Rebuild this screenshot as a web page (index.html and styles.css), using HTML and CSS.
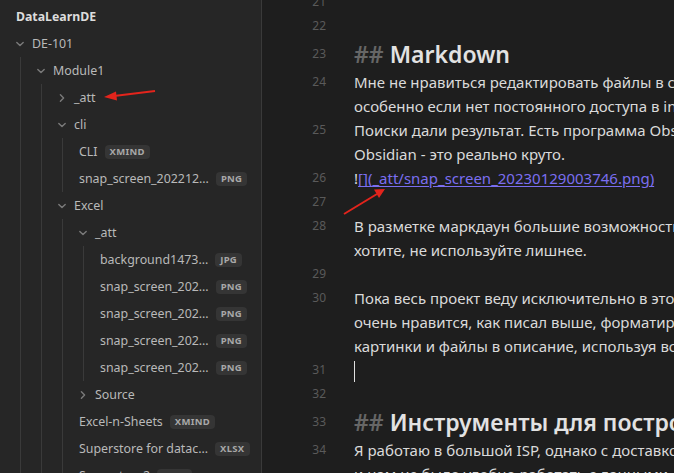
FILE: index.html
```html
<!DOCTYPE html>
<html lang="ru">
<head>
<meta charset="utf-8">
<title>DataLearnDE</title>
<link rel="stylesheet" href="styles.css">
</head>
<body>
<aside class="sidebar">
  <div class="vault-title">DataLearnDE</div>
  <div class="tree">
    <div class="folder">
      <div class="row folder-row"><svg class="chev" viewBox="0 0 10 10"><path d="M1.8 3.4 L5 6.6 L8.2 3.4"/></svg><span class="name">DE-101</span></div>
      <div class="children">
        <div class="folder">
          <div class="row folder-row"><svg class="chev" viewBox="0 0 10 10"><path d="M1.8 3.4 L5 6.6 L8.2 3.4"/></svg><span class="name">Module1</span></div>
          <div class="children">
            <div class="folder">
              <div class="row folder-row"><svg class="chev" viewBox="0 0 10 10"><path d="M3.4 1.8 L6.6 5 L3.4 8.2"/></svg><span class="name">_att</span></div>
            </div>
            <div class="folder">
              <div class="row folder-row"><svg class="chev" viewBox="0 0 10 10"><path d="M1.8 3.4 L5 6.6 L8.2 3.4"/></svg><span class="name">cli</span></div>
              <div class="children">
                <div class="row file-row"><span class="name">CLI</span><span class="tag">XMIND</span></div>
                <div class="row file-row"><span class="name">snap_screen_202212…</span><span class="tag">PNG</span></div>
              </div>
            </div>
            <div class="folder">
              <div class="row folder-row"><svg class="chev" viewBox="0 0 10 10"><path d="M1.8 3.4 L5 6.6 L8.2 3.4"/></svg><span class="name">Excel</span></div>
              <div class="children">
                <div class="folder">
                  <div class="row folder-row"><svg class="chev" viewBox="0 0 10 10"><path d="M1.8 3.4 L5 6.6 L8.2 3.4"/></svg><span class="name">_att</span></div>
                  <div class="children">
                    <div class="row file-row"><span class="name">background1473…</span><span class="tag">JPG</span></div>
                    <div class="row file-row"><span class="name">snap_screen_202…</span><span class="tag">PNG</span></div>
                    <div class="row file-row"><span class="name">snap_screen_202…</span><span class="tag">PNG</span></div>
                    <div class="row file-row"><span class="name">snap_screen_202…</span><span class="tag">PNG</span></div>
                    <div class="row file-row"><span class="name">snap_screen_202…</span><span class="tag">PNG</span></div>
                  </div>
                </div>
                <div class="folder">
                  <div class="row folder-row"><svg class="chev" viewBox="0 0 10 10"><path d="M3.4 1.8 L6.6 5 L3.4 8.2"/></svg><span class="name">Source</span></div>
                </div>
                <div class="row file-row"><span class="name">Excel-n-Sheets</span><span class="tag">XMIND</span></div>
                <div class="row file-row"><span class="name">Superstore for datac…</span><span class="tag">XLSX</span></div>
                <div class="row file-row"><span class="name">Superstore2</span><span class="tag">XLSX</span></div>
              </div>
            </div>
          </div>
        </div>
      </div>
    </div>
  </div>
</aside>
<main class="editor">
  <div class="doc">
    <div class="line"><span class="ln">21</span><span class="txt"></span></div>
    <div class="line"><span class="ln">22</span><span class="txt"></span></div>
    <div class="line h2"><span class="ln">23</span><span class="txt"><span class="hash">##</span> Markdown</span></div>
    <div class="line"><span class="ln">24</span><span class="txt">Мне не нравиться редактировать файлы в сыром виде на GitHub,<br>особенно если нет постоянного доступа в internet.</span></div>
    <div class="line"><span class="ln">25</span><span class="txt">Поиски дали результат. Есть программа Obsidian и я её попробовал.<br>Obsidian - это реально круто.</span></div>
    <div class="line"><span class="ln">26</span><span class="txt">!<span class="link">[](_att/snap_screen_20230129003746.png)</span></span></div>
    <div class="line"><span class="ln">27</span><span class="txt"></span></div>
    <div class="line"><span class="ln">28</span><span class="txt">В разметке маркдаун большие возможности для оформления, но если не<br>хотите, не используйте лишнее.</span></div>
    <div class="line"><span class="ln">29</span><span class="txt"></span></div>
    <div class="line"><span class="ln">30</span><span class="txt">Пока весь проект веду исключительно в этом редакторе. Мне<br>очень нравится, как писал выше, форматирование и возможность вставлять<br>картинки и файлы в описание, используя всего пару символов.</span></div>
    <div class="line"><span class="ln">31</span><span class="txt"><span class="cursor"></span></span></div>
    <div class="line"><span class="ln">32</span><span class="txt"></span></div>
    <div class="line h2"><span class="ln">33</span><span class="txt"><span class="hash">##</span> Инструменты для построения отчетов</span></div>
    <div class="line"><span class="ln">34</span><span class="txt">Я работаю в большой ISP, однако с доставкой данных до отчетов<br>и нам не было удобно работать с данными.</span></div>
  </div>
</main>
<svg class="annotations" width="674" height="473" viewBox="0 0 674 473">
  <g fill="#e3241c" stroke="#e3241c">
    <line x1="155" y1="91" x2="114" y2="96" stroke-width="2"/>
    <polygon points="104,97 116,91.5 117,100.5" stroke="none"/>
    <line x1="344" y1="214" x2="377" y2="194" stroke-width="2"/>
    <polygon points="385,189 374,189.5 379,198" stroke="none"/>
  </g>
</svg>
</body>
</html>
```

FILE: styles.css
```css
* { box-sizing: border-box; }

html, body {
  margin: 0;
  height: 100%;
}

body {
  display: flex;
  overflow: hidden;
  background: #1e1e1e;
  font-family: "Noto Sans", "Open Sans", sans-serif;
  position: relative;
}

.sidebar {
  width: 262px;
  flex: none;
  background: #262626;
  border-right: 1px solid #3a3a3a;
  padding-top: 3px;
  overflow: hidden;
  color: #b9b9b9;
  font-family: "Noto Sans", sans-serif;
  font-size: 12.4px;
}

.vault-title {
  height: 27px;
  line-height: 27px;
  padding-left: 16px;
  font-weight: 700;
  color: #dcdcdc;
  font-size: 12.3px;
}

.row {
  height: 27px;
  display: flex;
  align-items: center;
  white-space: nowrap;
  padding-right: 14px;
}

.folder-row {
  padding-left: 15px;
}

.file-row {
  padding-left: 16px;
}

.chev {
  width: 10px;
  height: 10px;
  flex: none;
  margin-right: 7px;
  fill: none;
  stroke: #7a7a7a;
  stroke-width: 1.4;
  stroke-linecap: round;
  stroke-linejoin: round;
}

.name {
  flex: none;
}

.children {
  margin-left: 20px;
  border-left: 1px solid #3a3a3a;
}

.tag {
  flex: none;
  margin-left: 7px;
  background: #353535;
  color: #a8a8a8;
  font-family: "Noto Sans", sans-serif;
  font-size: 9.5px;
  font-weight: 700;
  letter-spacing: 0.3px;
  line-height: 14px;
  padding: 0 5px;
  border-radius: 4px;
}

.editor {
  flex: 1;
  overflow: hidden;
  color: #dadada;
  font-size: 15px;
}

.doc {
  margin-top: -10px;
}

.line {
  display: flex;
}

.ln {
  width: 64px;
  flex: none;
  text-align: right;
  margin-right: 28px;
  color: #5a5a5a;
  font-size: 12px;
  line-height: 24px;
}

.txt {
  white-space: nowrap;
  line-height: 24px;
  min-height: 24px;
}

.line.h2 .ln {
  line-height: 32px;
}

.line.h2 .txt {
  font-size: 23px;
  font-weight: 600;
  line-height: 32px;
  color: #e2e2e2;
}

.hash {
  color: #666666;
}

.link {
  color: #7b6ef0;
  text-decoration: underline;
  text-underline-offset: 2px;
}

.cursor {
  display: inline-block;
  width: 1px;
  height: 21px;
  background: #e0e0e0;
  vertical-align: middle;
}

.annotations {
  position: absolute;
  left: 0;
  top: 0;
  pointer-events: none;
}
```
